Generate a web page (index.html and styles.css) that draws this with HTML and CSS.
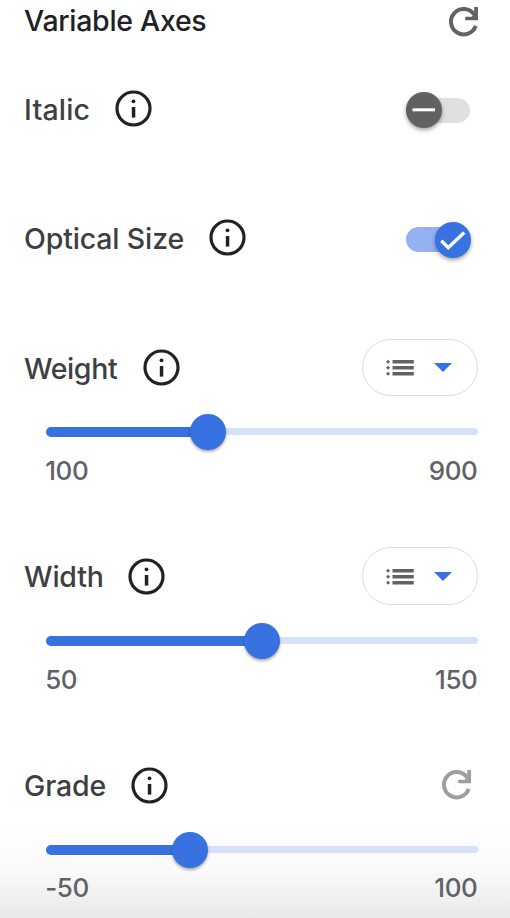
FILE: index.html
```html
<!DOCTYPE html>
<html lang="en">
<head>
<meta charset="utf-8">
<title>Variable Axes</title>
<link rel="stylesheet" href="styles.css">
</head>
<body>
<svg class="defs" aria-hidden="true">
  <symbol id="info" viewBox="0 0 37 37"><circle cx="18.5" cy="18.5" r="16.5" fill="none" stroke="currentColor" stroke-width="3.2"/><circle cx="18.5" cy="11.3" r="1.9" fill="currentColor"/><path d="M16.8 17h3.5v10.6h-3.5z" fill="currentColor"/></symbol>
  <symbol id="reset" viewBox="0 0 30 30"><path d="M25.3 7.7A12.7 12.7 0 1 0 26.7 18.8" fill="none" stroke="currentColor" stroke-width="3.9"/><path d="M25.2 0H29V13.3H16.2V9.7H22.8L25.2 7z" fill="currentColor"/></symbol>
  <symbol id="list" viewBox="0 0 28 18"><path d="M6.5 1h21.3v3.4H6.5zM6.5 7.1h21.3v3.4H6.5zM6.5 13.1h21.3v3.4H6.5zM2.1.7l2 2-2 2-2-2zM2.1 6.8l2 2-2 2-2-2zM2.1 12.8l2 2-2 2-2-2z" fill="currentColor"/></symbol>
</svg>
<main class="panel">
  <header class="header">
    <h1 class="title">Variable Axes</h1>
    <button class="reset" aria-label="Reset all"><svg><use href="#reset"/></svg></button>
  </header>
  <section class="toggle-row">
    <span class="label italic">Italic</span><svg class="info"><use href="#info"/></svg>
    <div class="switch"><span class="thumb"><svg viewBox="0 0 36 36"><path d="M6.5 17.8h22.5" stroke-width="3"/></svg></span></div>
  </section>
  <section class="toggle-row">
    <span class="label optical">Optical Size</span><svg class="info"><use href="#info"/></svg>
    <div class="switch on"><span class="thumb"><svg viewBox="0 0 36 36"><path d="M6.3 18.7l7 7L29.2 10.5" stroke-width="3.4"/></svg></span></div>
  </section>
  <section class="axis">
    <div class="axis-head">
      <span class="label weight">Weight</span><svg class="info"><use href="#info"/></svg>
      <button class="menu short" aria-label="Weight values"><svg class="list"><use href="#list"/></svg><span class="caret"></span></button>
    </div>
    <div class="slider"><div class="fill" style="width:37.5%"><span class="knob"></span></div></div>
    <div class="range"><span>100</span><span>900</span></div>
  </section>
  <section class="axis">
    <div class="axis-head">
      <span class="label width">Width</span><svg class="info"><use href="#info"/></svg>
      <button class="menu" aria-label="Width values"><svg class="list"><use href="#list"/></svg><span class="caret"></span></button>
    </div>
    <div class="slider"><div class="fill" style="width:50%"><span class="knob"></span></div></div>
    <div class="range"><span>50</span><span>150</span></div>
  </section>
  <section class="axis">
    <div class="axis-head">
      <span class="label grade">Grade</span><svg class="info"><use href="#info"/></svg>
      <button class="reset muted" aria-label="Reset grade"><svg><use href="#reset"/></svg></button>
    </div>
    <div class="slider"><div class="fill" style="width:33.333%"><span class="knob"></span></div></div>
    <div class="range"><span>-50</span><span>100</span></div>
  </section>
</main>
</body>
</html>
```
FILE: styles.css
```css
* { box-sizing: border-box; }
body {
  margin: 0;
  height: 918px;
  overflow: hidden;
  font-family: Inter, "Open Sans", sans-serif;
  font-weight: 500;
  background: linear-gradient(#fff 0, #fff 825px, #fafafa 870px, #e9e9e9 918px);
}
.defs { display: none; }
.panel { padding: 0 32px 0 24px; }
button { padding: 0; border: 0; background: none; }
svg { display: block; flex: none; }
.header { height: 42px; display: flex; align-items: center; justify-content: space-between; margin-bottom: 38px; }
.title { margin: 0; font-size: 28.5px; line-height: 42px; font-weight: 500; letter-spacing: -0.3px; color: #202124; white-space: nowrap; }
.reset { width: 30px; height: 30px; color: #5f6368; margin: 2px -1px 0 0; }
.reset svg { width: 30px; height: 30px; }
.reset.muted { color: #9e9e9e; margin: 0 6px 0 auto; }
.toggle-row { height: 58px; display: flex; align-items: center; margin-bottom: 71px; }
.label { flex: none; font-size: 28.5px; line-height: 40px; color: #3c4043; white-space: nowrap; padding-top: 2px; }
.italic { width: 91px; letter-spacing: 0.2px; }
.optical { width: 185px; letter-spacing: -0.15px; }
.weight { width: 119px; padding-top: 3px; letter-spacing: -0.4px; }
.width { width: 104.4px; letter-spacing: -0.2px; }
.grade { width: 107.4px; letter-spacing: -0.1px; }
.info { width: 37px; height: 37px; color: #202124; }
.toggle-row .info { margin-bottom: 2px; }
.switch { width: 64px; height: 25px; margin: 3px 8px 0 auto; border-radius: 13px; background: #e0e0e0; display: flex; align-items: center; }
.thumb { width: 36px; height: 36px; margin-bottom: 1px; border-radius: 50%; background: #616161; box-shadow: 0 2px 4px rgba(0, 0, 0, .38); flex: none; }
.thumb path { fill: none; stroke: #fff; }
.switch.on { background: #94b2f1; justify-content: flex-end; }
.switch.on .thumb { background: #3871e0; margin: 0 -1px 0 0; }
.axis { height: 209px; }
.axis:last-child { height: 162px; }
.axis-head { height: 58px; display: flex; align-items: center; }
.menu { width: 116px; height: 58px; border: 1px solid #dadce0; border-radius: 29px; margin-left: auto; display: flex; align-items: center; padding: 1px 0 0 23px; color: #5f6368; }
.menu.short { height: 57px; margin-top: 1px; padding-top: 0; }
.list { width: 28px; height: 18px; }
.caret { margin-left: 20px; border: 9px solid transparent; border-top-color: #3871e0; border-bottom: 0; }
.slider { margin: 32px 0 0 22px; width: 432px; height: 7px; border-radius: 4px; background: #d6e2fa; display: flex; align-items: center; }
.fill { height: 10px; border-radius: 5px; background: #3871e0; display: flex; align-items: center; justify-content: flex-end; flex: none; }
.knob { width: 36px; height: 36px; margin-right: -18px; border-radius: 50%; background: #3871e0; box-shadow: 0 2px 3px rgba(0, 0, 0, .32); flex: none; }
.range { display: flex; justify-content: space-between; margin: 20px .5px 0 21.2px; font-size: 26px; line-height: 32px; letter-spacing: -0.4px; color: #5f6368; }
.axis:last-child .range { margin-top: 19px; }
```
